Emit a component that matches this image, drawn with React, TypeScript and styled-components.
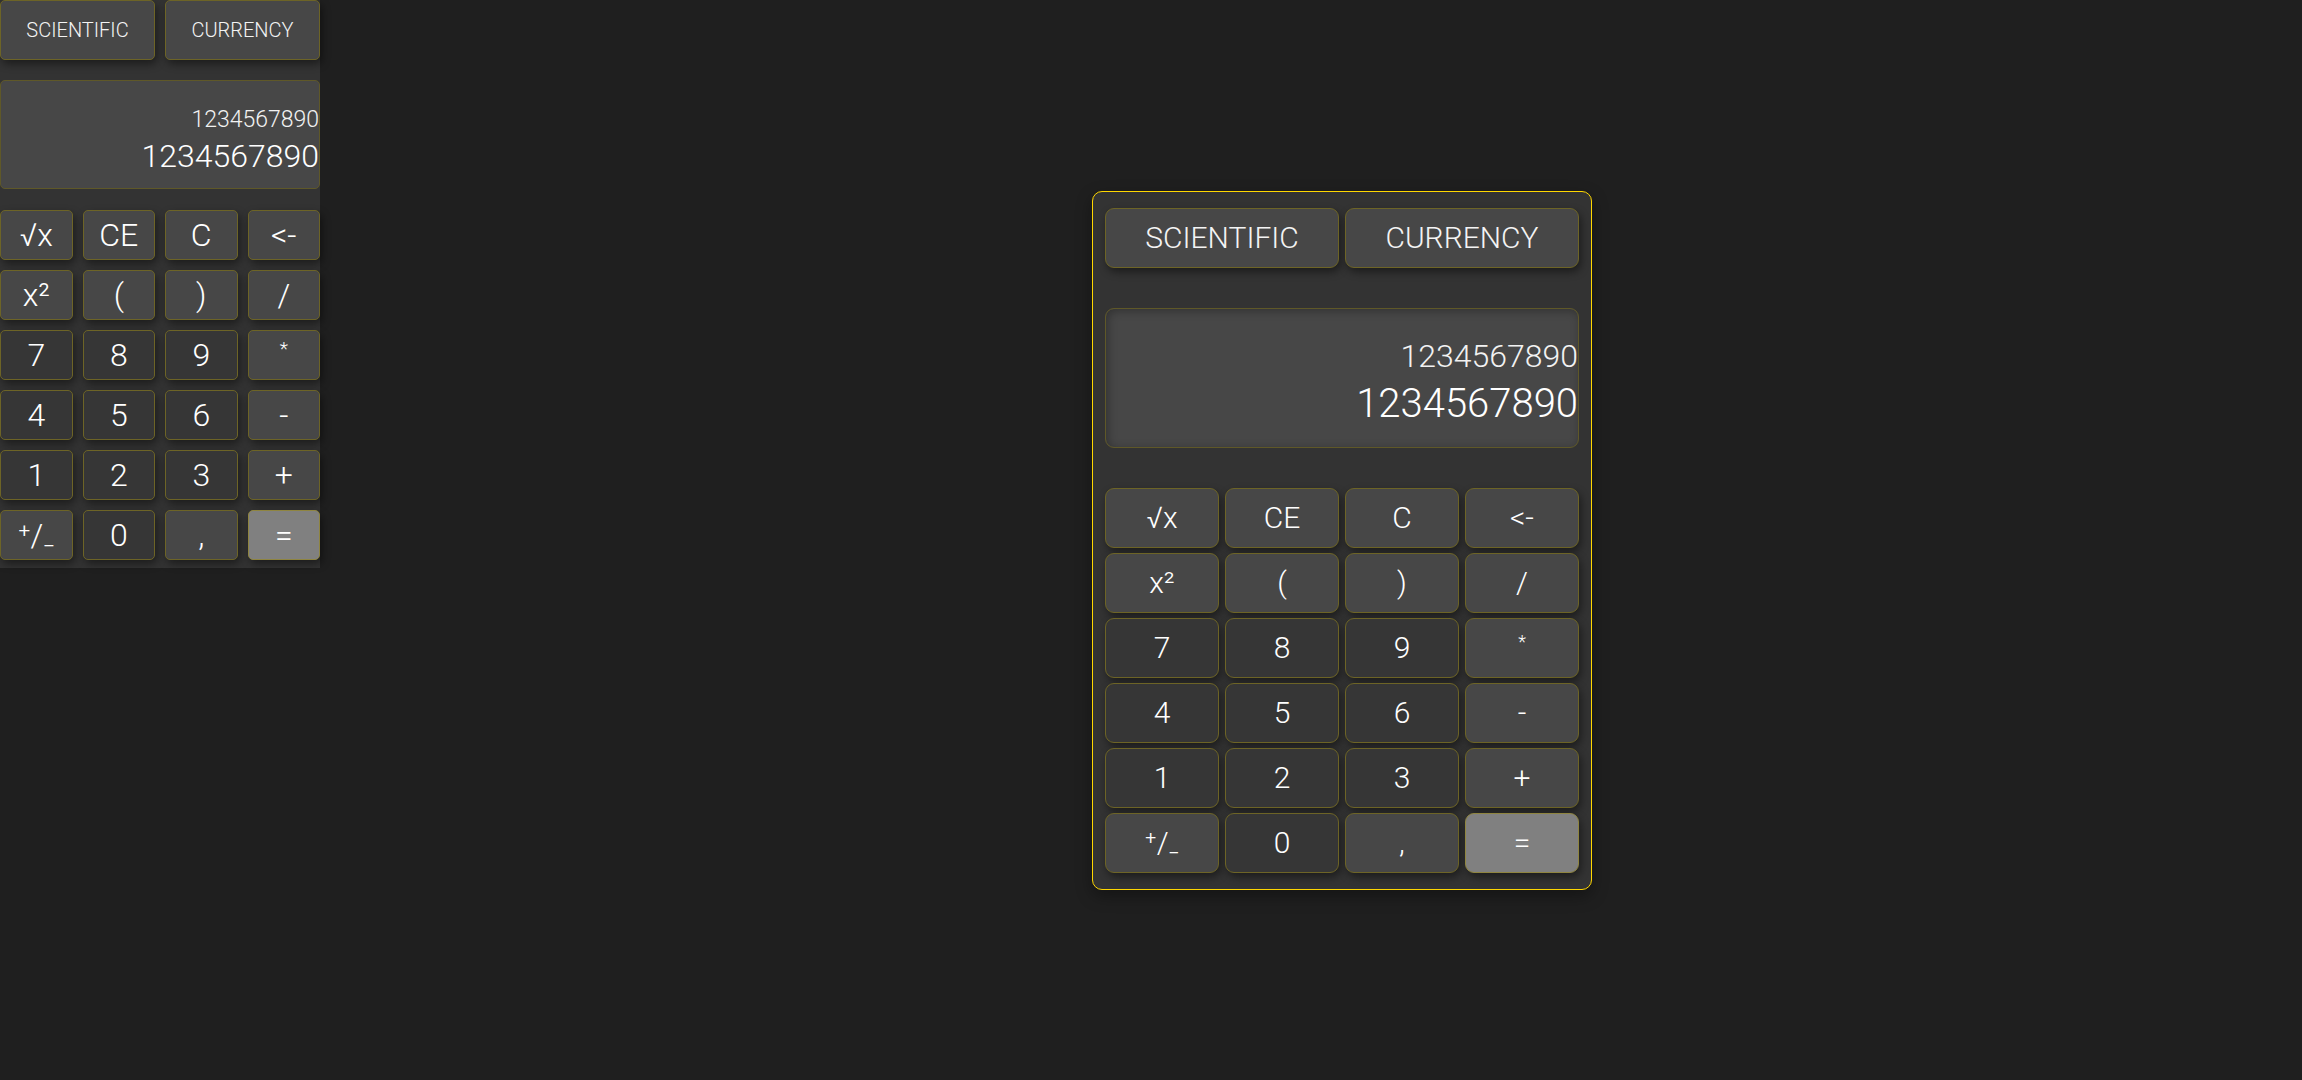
import React from "react";
import styled, { createGlobalStyle, css } from "styled-components";

const GlobalStyle = createGlobalStyle`
  html, body {
    margin: 0;
    padding: 0;
    background: #1f1f1f;
  }
  body {
    font-family: Roboto, "Liberation Sans", Arial, sans-serif;
    font-weight: 300;
    color: #ffffff;
  }
  * { box-sizing: border-box; }
`;

type Size = "compact" | "full";
type Tone = "light" | "dark" | "accent";

const Page = styled.div`
  display: flex;
  align-items: flex-start;
  width: 2302px;
  height: 1080px;
`;

const Stage = styled.main`
  flex: 1;
  height: 100%;
  display: flex;
  align-items: center;
  justify-content: center;
  padding-left: 62px;
`;

const Shell = styled.div<{ $size: Size }>`
  display: flex;
  flex-direction: column;
  background: #333333;
  ${({ $size }) =>
    $size === "full"
      ? css`
          width: 500px;
          padding: 16px 12px;
          border: 1px solid #ffd700;
          border-radius: 10px;
          box-shadow: 0 6px 16px rgba(0, 0, 0, 0.35);
        `
      : css`
          width: 320px;
          padding: 0 0 8px 0;
        `}
`;

const ModeRow = styled.div<{ $size: Size }>`
  display: grid;
  grid-template-columns: 1fr 1fr;
  gap: ${({ $size }) => ($size === "full" ? "6px" : "10px")};
`;

const ModeButton = styled.button<{ $size: Size }>`
  height: 60px;
  background: #474747;
  color: #f4f4f4;
  border: 1px solid #6d6426;
  border-radius: ${({ $size }) => ($size === "full" ? "9px" : "5px")};
  font-family: inherit;
  font-size: ${({ $size }) => ($size === "full" ? "30px" : "20px")};
  font-weight: 300;
  box-shadow: 2px 4px 8px rgba(0, 0, 0, 0.45);
  padding: 0;
  cursor: pointer;
`;

const Display = styled.div<{ $size: Size }>`
  display: flex;
  flex-direction: column;
  align-items: flex-end;
  background: #474747;
  border: 1px solid #5f5828;
  ${({ $size }) =>
    $size === "full"
      ? css`
          margin-top: 40px;
          height: 140px;
          padding-top: 27px;
          border-radius: 9px;
          box-shadow: inset 2px 2px 10px rgba(0, 0, 0, 0.3);
        `
      : css`
          margin-top: 20px;
          height: 109px;
          padding-top: 25px;
          border-radius: 5px;
        `}
`;

const History = styled.div<{ $size: Size }>`
  color: #f2f2f2;
  white-space: nowrap;
  ${({ $size }) =>
    $size === "full"
      ? css`
          font-size: 32px;
          line-height: 40px;
        `
      : css`
          font-size: 23px;
          line-height: 28px;
        `}
`;

const Current = styled.div<{ $size: Size }>`
  color: #ffffff;
  white-space: nowrap;
  ${({ $size }) =>
    $size === "full"
      ? css`
          font-size: 40px;
          line-height: 48px;
          margin-top: 4px;
        `
      : css`
          font-size: 32px;
          line-height: 38px;
          margin-top: 3px;
        `}
`;

const Keypad = styled.div<{ $size: Size }>`
  display: grid;
  grid-template-columns: repeat(4, 1fr);
  ${({ $size }) =>
    $size === "full"
      ? css`
          margin-top: 40px;
          grid-auto-rows: 60px;
          column-gap: 6px;
          row-gap: 5px;
        `
      : css`
          margin-top: 21px;
          grid-auto-rows: 50px;
          column-gap: 10px;
          row-gap: 10px;
        `}
`;

const toneBg: Record<Tone, string> = {
  light: "#474747",
  dark: "#363636",
  accent: "#808080",
};

const Key = styled.button<{ $tone: Tone; $size: Size }>`
  display: flex;
  align-items: center;
  justify-content: center;
  padding: 0;
  background: ${({ $tone }) => toneBg[$tone]};
  color: #ffffff;
  border: 1px solid ${({ $tone }) => ($tone === "accent" ? "#8f8540" : "#6d6426")};
  border-radius: ${({ $size }) => ($size === "full" ? "9px" : "5px")};
  font-family: inherit;
  font-size: ${({ $size }) => ($size === "full" ? "30px" : "32px")};
  font-weight: 300;
  box-shadow: 2px 4px 8px rgba(0, 0, 0, 0.45);
  cursor: pointer;
`;

const SmallGlyph = styled.span`
  font-size: 0.6em;
  transform: translateY(-0.35em);
`;

const keys: { label: React.ReactNode; id: string; tone: Tone }[] = [
  { id: "sqrt", label: "√x", tone: "light" },
  { id: "ce", label: "CE", tone: "light" },
  { id: "c", label: "C", tone: "light" },
  { id: "back", label: "<-", tone: "light" },
  { id: "sq", label: "x²", tone: "light" },
  { id: "lp", label: "(", tone: "light" },
  { id: "rp", label: ")", tone: "light" },
  { id: "div", label: "/", tone: "light" },
  { id: "7", label: "7", tone: "dark" },
  { id: "8", label: "8", tone: "dark" },
  { id: "9", label: "9", tone: "dark" },
  { id: "mul", label: <SmallGlyph>*</SmallGlyph>, tone: "light" },
  { id: "4", label: "4", tone: "dark" },
  { id: "5", label: "5", tone: "dark" },
  { id: "6", label: "6", tone: "dark" },
  { id: "sub", label: "-", tone: "light" },
  { id: "1", label: "1", tone: "dark" },
  { id: "2", label: "2", tone: "dark" },
  { id: "3", label: "3", tone: "dark" },
  { id: "add", label: "+", tone: "light" },
  { id: "neg", label: "⁺/₋", tone: "light" },
  { id: "0", label: "0", tone: "dark" },
  { id: "dec", label: ",", tone: "light" },
  { id: "eq", label: "=", tone: "accent" },
];

const Calculator: React.FC<{ size: Size }> = ({ size }) => (
  <Shell $size={size}>
    <ModeRow $size={size}>
      <ModeButton $size={size}>SCIENTIFIC</ModeButton>
      <ModeButton $size={size}>CURRENCY</ModeButton>
    </ModeRow>
    <Display $size={size}>
      <History $size={size}>1234567890</History>
      <Current $size={size}>1234567890</Current>
    </Display>
    <Keypad $size={size}>
      {keys.map((k) => (
        <Key key={k.id} $tone={k.tone} $size={size}>
          {k.label}
        </Key>
      ))}
    </Keypad>
  </Shell>
);

export default function App() {
  return (
    <>
      <GlobalStyle />
      <Page>
        <Calculator size="compact" />
        <Stage>
          <Calculator size="full" />
        </Stage>
      </Page>
    </>
  );
}
